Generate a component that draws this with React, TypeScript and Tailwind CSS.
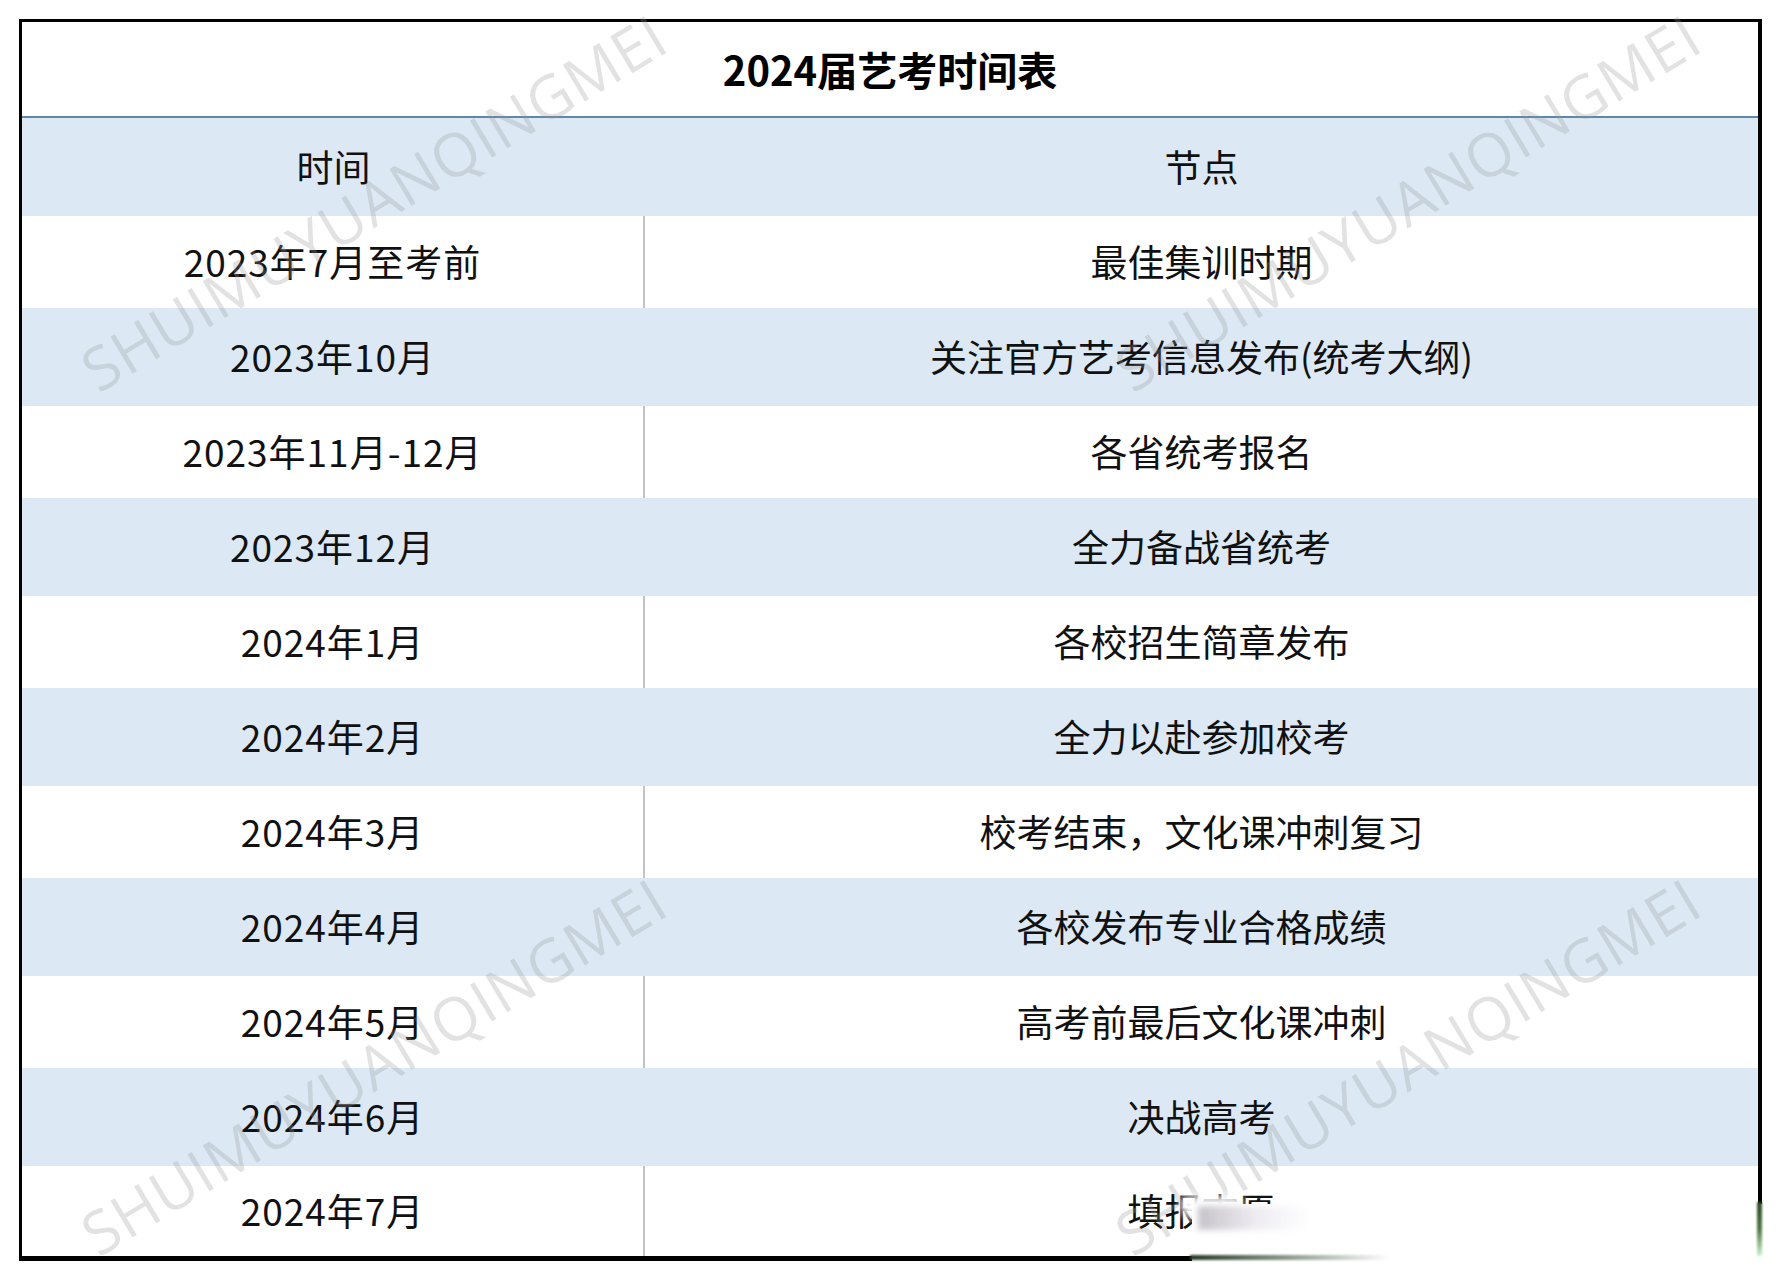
import React from "react";

const rows: [string, string][] = [
  ["2023年7月至考前", "最佳集训时期"],
  ["2023年10月", "关注官方艺考信息发布(统考大纲)"],
  ["2023年11月-12月", "各省统考报名"],
  ["2023年12月", "全力备战省统考"],
  ["2024年1月", "各校招生简章发布"],
  ["2024年2月", "全力以赴参加校考"],
  ["2024年3月", "校考结束，文化课冲刺复习"],
  ["2024年4月", "各校发布专业合格成绩"],
  ["2024年5月", "高考前最后文化课冲刺"],
  ["2024年6月", "决战高考"],
  ["2024年7月", "填报志愿"],
];

const font = { fontFamily: '"Noto Sans CJK SC", "Noto Sans", sans-serif' };

function Watermark({ left, top }: { left: number; top: number }) {
  return (
    <span
      className="pointer-events-none absolute whitespace-nowrap text-[60px] leading-[60px] tracking-[1px] text-[rgba(150,150,150,0.28)] origin-bottom-left -rotate-[31deg]"
      style={{ left, top, fontFamily: '"Open Sans", "Liberation Sans", sans-serif' }}
    >
      SHUIMUYUANQINGMEI
    </span>
  );
}

export default function App() {
  return (
    <div className="relative h-[1280px] w-[1782px] bg-white overflow-hidden" style={font}>
      <div className="ml-[19px] pt-[19px]">
        <div className="w-[1743px] border-black border-l-[3px] border-t-[3px] border-r-[4px] border-b-[5px] bg-white">
          <div className="flex h-[94px] items-center justify-center text-[40px] font-bold text-black">
            2024届艺考时间表
          </div>
          <div className="h-[2px] bg-[#5d88a8]" />
          <div className="flex h-[98px] bg-[#dce9f5] text-[37px] text-[#111]">
            <div className="flex w-[623px] items-center justify-center">时间</div>
            <div className="flex flex-1 items-center justify-center">节点</div>
          </div>
          {rows.map(([t, n], i) => {
            const blue = i % 2 === 1;
            const last = i === rows.length - 1;
            return (
              <div
                key={i}
                className={
                  "flex text-[37px] text-[#111] " +
                  (blue ? "h-[98px] bg-[#dce9f5]" : last ? "h-[90px] bg-white" : "h-[92px] bg-white")
                }
              >
                <div className="flex w-[621px] items-center justify-center tracking-[1px]">{t}</div>
                <div className={blue ? "w-[2px]" : "w-[2px] bg-[#c3c3c3]"} />
                <div className="flex flex-1 items-center justify-center">{n}</div>
              </div>
            );
          })}
        </div>
      </div>

      <Watermark left={102} top={340} />
      <Watermark left={1136} top={340} />
      <Watermark left={102} top={1204} />
      <Watermark left={1136} top={1204} />

      {/* smudged bottom-right corner */}
      <div className="pointer-events-none absolute left-[1192px] top-[1204px] h-[76px] w-[590px] bg-white" />
      <div className="pointer-events-none absolute left-[1182px] top-[1196px] h-[20px] w-[60px] bg-white blur-[4px]" />
      <div className="pointer-events-none absolute left-[1198px] top-[1206px] h-[24px] w-[110px] bg-gradient-to-r from-[rgba(90,80,100,0.35)] via-[rgba(150,140,170,0.18)] to-transparent blur-[3px]" />
      <div className="pointer-events-none absolute left-[1190px] top-[1255px] h-[5px] w-[200px] bg-gradient-to-r from-[#2a3a28] via-[rgba(70,90,70,0.6)] to-transparent blur-[1px]" />
      <div className="pointer-events-none absolute left-[1757px] top-[1202px] h-[54px] w-[5px] bg-gradient-to-b from-[#2f4a2c] via-[#4f7a44] to-[rgba(120,220,120,0.35)] blur-[1px]" />
    </div>
  );
}
